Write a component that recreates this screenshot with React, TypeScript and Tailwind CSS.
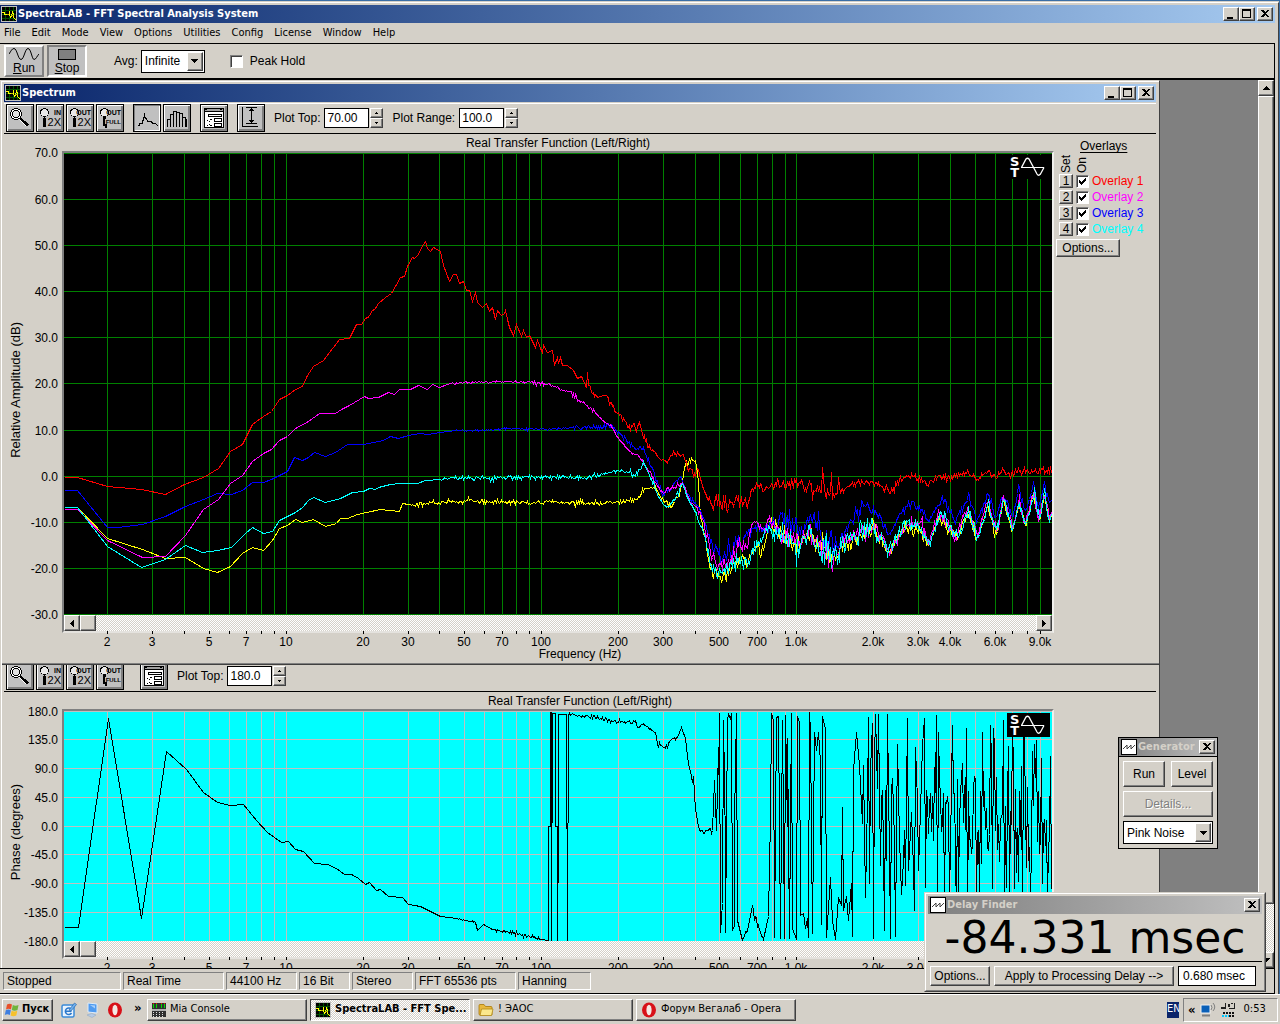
import React, { useId } from "react";

type Point = [x: number, y: number, noise?: number];

const RAISED =
  "border border-t-white border-l-white border-r-[#404040] border-b-[#404040] bg-[#d4d0c8] shadow-[inset_-1px_-1px_0_#808080]";
const SUNKEN = "border border-t-[#808080] border-l-[#808080] border-r-white border-b-white";
const DITHER = "bg-[repeating-conic-gradient(#ffffff_0_25%,#d4d0c8_0_50%)] bg-[length:2px_2px]";
const UI = "font-['DejaVu_Sans_Condensed','Noto_Sans',sans-serif] text-[11px]";
const ARIAL = "font-['Liberation_Sans',Arial,sans-serif] text-[12px]";

/* ---------- trace data ---------- */

function random(seed: number) {
  let s = seed;
  return () => {
    s = (s * 1664525 + 1013904223) % 4294967296;
    return s / 4294967296;
  };
}

function trace(points: Point[], seed: number) {
  const next = random(seed);
  const out: string[] = [];
  for (let i = 0; i < points.length - 1; i++) {
    const [x0, y0, n0 = 0] = points[i];
    const [x1, y1] = points[i + 1];
    if (n0 === 0) {
      out.push(`${x0},${y0}`);
      continue;
    }
    for (let x = x0; x < x1; x++) {
      const y = y0 + ((y1 - y0) * (x - x0)) / (x1 - x0);
      const r = next() + next() - 1;
      const spike = next() > 0.94 ? 1.7 : 1;
      out.push(`${x},${Math.round(y + r * n0 * 1.4 * spike)}`);
    }
  }
  const last = points[points.length - 1];
  out.push(`${last[0]},${last[1]}`);
  return out.join(" ");
}

const RED: Point[] = [
  [64, 477], [77, 477], [107, 486], [141, 489], [165, 494], [184, 484], [203, 477], [218, 468], [230, 451], [242, 444],
  [252, 424], [263, 416], [271, 411], [279, 399], [287, 395], [295, 389], [302, 386], [307, 375], [313, 366], [323, 360],
  [339, 339], [349, 338], [356, 324], [361, 324], [365, 318], [369, 316], [371, 311], [375, 308], [378, 303], [385, 297],
  [391, 293], [400, 277], [404, 276], [407, 266], [412, 257], [414, 258], [418, 254], [421, 247], [425, 241], [427, 248],
  [430, 251], [433, 247], [440, 251], [443, 265], [449, 281], [453, 274], [456, 274], [459, 283], [463, 281], [466, 290],
  [469, 290], [472, 301], [475, 292], [477, 302], [482, 307], [486, 303], [489, 311], [492, 307], [495, 319], [497, 310],
  [500, 315, 1], [504, 313], [505, 310], [507, 319], [509, 327], [513, 335], [516, 324], [521, 336], [523, 330], [526, 337],
  [529, 335], [532, 341], [535, 347], [537, 340], [539, 345], [542, 353], [543, 345], [547, 352], [552, 350], [554, 365],
  [557, 357], [558, 363], [560, 357], [562, 365], [567, 365], [573, 370], [577, 378], [581, 376], [586, 387], [587, 372],
  [588, 386, 3], [593, 394, 2], [597, 397, 1], [606, 395, 3], [617, 413, 3], [630, 427, 4], [637, 426], [639, 423, 3],
  [644, 438, 3], [650, 448, 2], [658, 458, 1], [667, 461, 2], [673, 452, 2], [683, 456, 3], [687, 465, 4], [695, 475],
  [697, 467, 3], [702, 487, 5], [707, 497, 7], [712, 503, 8], [727, 505, 8], [740, 500, 9], [748, 496, 6], [753, 488, 5],
  [765, 488, 4], [773, 483, 6], [797, 483, 6], [812, 489, 6], [821, 492], [822, 467], [824, 492, 5], [830, 492], [831, 472],
  [832, 496, 4], [837, 492], [838, 477], [840, 492, 3], [845, 487, 3], [857, 482, 3], [873, 481, 3], [885, 488, 5],
  [892, 492, 5], [896, 482, 3], [905, 475, 3], [917, 478, 3], [928, 485, 4], [938, 474, 4], [950, 479, 3], [960, 473, 3],
  [968, 472, 3], [977, 480, 3], [985, 472, 3], [995, 476, 3], [1002, 470, 3], [1010, 475, 3], [1018, 471, 4], [1045, 470, 5],
  [1051, 473],
];

const MAGENTA: Point[] = [
  [64, 509], [77, 509], [107, 540], [142, 557], [165, 556], [185, 535], [203, 509], [218, 499], [230, 483], [242, 475],
  [252, 461], [263, 453], [271, 449], [279, 440], [287, 436], [295, 428], [308, 421], [319, 413], [335, 413], [341, 409],
  [349, 405], [364, 396], [368, 398], [378, 397], [388, 392], [394, 394], [399, 389], [410, 389], [418, 385], [427, 389],
  [432, 384], [439, 387], [450, 383, 1], [467, 382, 1], [507, 381, 1], [533, 382, 2], [553, 385, 2], [563, 390, 1],
  [570, 392, 2], [580, 401, 2], [593, 410, 1], [602, 420, 1], [610, 425, 1], [618, 438, 1], [630, 452, 1], [638, 455, 2],
  [647, 468, 2], [655, 482, 2], [663, 493, 2], [670, 488, 2], [682, 482, 2], [687, 493, 2], [690, 502, 2], [698, 508, 4],
  [705, 530, 5], [710, 553, 7], [718, 567, 9], [727, 563, 9], [737, 543, 7], [747, 548, 5], [752, 522, 1], [757, 521, 3],
  [763, 533, 4], [767, 520, 7], [780, 532, 9], [797, 540, 8], [810, 533, 10], [820, 548, 12], [833, 557, 10], [843, 543, 7],
  [857, 533, 8], [873, 527, 8], [882, 535, 5], [888, 553, 5], [897, 540, 5], [907, 523, 6], [920, 523, 6], [928, 543, 5],
  [938, 512, 6], [955, 535, 5], [967, 506, 5], [977, 535, 5], [987, 500, 5], [996, 530, 5], [1003, 497, 5], [1012, 528, 4],
  [1019, 500, 5], [1025, 525, 4], [1033, 490, 5], [1038, 520, 4], [1044, 492, 4], [1049, 518], [1051, 512],
];

const BLUE: Point[] = [
  [64, 490], [77, 490], [107, 527], [117, 527], [142, 524], [165, 516], [185, 506], [203, 499], [217, 493], [231, 494],
  [242, 490], [252, 482], [263, 482], [271, 479], [287, 471], [294, 457], [302, 460], [308, 457], [314, 452], [325, 456],
  [335, 452], [347, 444], [363, 444], [383, 440], [390, 436], [398, 438], [408, 435], [420, 433], [427, 434], [440, 432],
  [455, 430, 1], [480, 430, 1], [507, 428, 1], [547, 429, 1], [573, 427, 2], [600, 426, 3], [612, 426, 2], [617, 430, 3],
  [627, 442, 2], [635, 448, 2], [640, 447, 2], [647, 457, 3], [653, 473, 3], [662, 492, 3], [670, 488, 2], [680, 476, 2],
  [687, 493, 2], [698, 507, 3], [705, 523, 5], [712, 548, 9], [720, 557, 9], [730, 550, 9], [740, 543, 8], [750, 533, 5],
  [757, 523, 3], [763, 533, 5], [768, 520, 11], [787, 520, 11], [800, 530, 10], [813, 521, 12], [822, 536, 18],
  [833, 547, 10], [847, 530, 7], [862, 505, 6], [877, 510, 6], [888, 535, 3], [903, 508, 5], [912, 503, 5], [928, 520, 3],
  [942, 498, 6], [955, 522, 4], [968, 495, 5], [977, 520, 4], [988, 492, 5], [996, 518, 4], [1003, 492, 5], [1012, 517, 4],
  [1018, 487, 5], [1026, 510, 4], [1033, 485, 5], [1038, 507, 3], [1044, 485, 4], [1049, 502], [1051, 500],
];

const CYAN: Point[] = [
  [64, 507], [77, 507], [107, 546], [141, 567], [165, 559], [185, 545], [202, 552], [217, 550], [231, 547], [245, 533],
  [252, 527], [263, 533], [272, 531], [279, 520], [295, 512], [302, 507], [308, 500], [313, 497], [325, 502], [340, 498],
  [352, 492], [363, 491], [369, 488], [375, 489], [378, 487], [390, 484], [400, 483], [417, 483], [425, 480], [440, 479, 1],
  [455, 477, 2], [467, 478, 2], [533, 477, 2], [587, 477, 2], [600, 474, 1], [620, 470, 2], [635, 475, 2], [643, 463, 2],
  [650, 475, 4], [657, 495, 2], [663, 505, 1], [668, 507, 2], [677, 493, 3], [682, 482, 2], [687, 498, 2], [695, 513, 4],
  [702, 530, 5], [710, 563, 5], [718, 574, 7], [727, 567, 7], [737, 560, 6], [747, 563, 6], [757, 543, 6], [768, 527, 8],
  [783, 538, 10], [798, 548, 8], [808, 530, 9], [820, 550, 16], [832, 556, 15], [843, 548, 8], [853, 535, 9], [872, 525, 9],
  [882, 540, 5], [887, 552, 5], [903, 525, 6], [918, 527, 5], [928, 545, 5], [940, 513, 6], [957, 537, 5], [968, 512, 6],
  [977, 537, 4], [988, 505, 6], [996, 532, 5], [1003, 500, 6], [1012, 529, 4], [1019, 502, 5], [1025, 526, 4],
  [1034, 493, 5], [1039, 520, 4], [1044, 493, 4], [1049, 521], [1051, 514],
];

const YELLOW: Point[] = [
  [64, 507], [77, 507], [107, 538], [142, 549], [165, 558], [185, 557], [203, 568], [217, 572], [230, 566], [242, 553],
  [252, 547], [263, 550], [272, 540], [279, 528], [287, 525], [295, 519], [302, 522], [313, 519], [325, 526], [336, 523],
  [340, 518], [347, 518], [357, 514], [380, 509], [399, 511], [402, 503], [408, 505, 2], [440, 502, 2], [465, 501, 2],
  [540, 502, 2], [600, 502, 2], [625, 501, 2], [637, 498, 2], [645, 488, 1], [655, 487, 2], [660, 497, 3], [670, 506, 3],
  [678, 498, 3], [682, 480, 3], [685, 462, 5], [690, 463, 5], [694, 457, 5], [697, 472], [698, 483], [700, 517, 4],
  [705, 540, 5], [710, 570, 5], [718, 575, 6], [728, 572, 5], [740, 557, 6], [747, 563, 5], [757, 543, 6], [763, 550],
  [769, 518, 8], [783, 540, 8], [798, 545, 8], [808, 530, 9], [820, 548, 14], [833, 558, 9], [843, 546, 9], [853, 538, 8],
  [872, 527, 10], [882, 543, 5], [888, 554, 4], [903, 526, 5], [918, 530, 5], [928, 545, 4], [938, 516, 6], [955, 537, 5],
  [967, 514, 6], [977, 537, 4], [987, 506, 6], [996, 533, 4], [1003, 502, 5], [1012, 530, 4], [1019, 503, 5],
  [1025, 526, 4], [1033, 494, 5], [1038, 521, 4], [1044, 496, 4], [1049, 519], [1051, 515],
];

const PHASE_START: Point[] = [
  [64, 927], [78, 927], [108, 718], [141, 918], [166, 751], [186, 769], [203, 792], [217, 802], [230, 805], [243, 804],
  [256, 820], [267, 832], [281, 842], [288, 841], [295, 849], [303, 851], [314, 863], [327, 864], [336, 868], [344, 874],
  [351, 874], [358, 878], [365, 884], [369, 882], [376, 890], [380, 889], [388, 896], [402, 897], [408, 904], [420, 906],
  [428, 910], [440, 916], [457, 918, 1], [475, 922], [477, 930], [483, 924], [492, 929, 1], [507, 932, 2], [520, 934, 2],
  [540, 939], [548, 940], [548, 826], [550, 826], [550, 712], [551, 712], [551, 940], [552, 713], [555, 713], [555, 826],
  [557, 826], [557, 940], [558, 826], [558, 714], [566, 714], [567, 940], [568, 714, 2], [587, 716, 2], [600, 718, 2],
  [617, 721, 2], [633, 723, 4], [645, 726, 3], [655, 732], [657, 743, 2], [666, 747, 2], [672, 737, 3], [677, 737],
  [681, 727], [685, 738], [687, 757, 2], [692, 782], [693, 776], [695, 810, 3], [700, 832, 2], [712, 830], [714, 780],
  [716, 830], [718, 747], [719, 800], [719, 713], [720, 932], [722, 903], [723, 720], [725, 845], [725, 932], [727, 720],
  [728, 713], [730, 719], [731, 713], [732, 930], [734, 925], [734, 820], [736, 713], [737, 920], [741, 939, 4],
  [747, 930], [752, 905, 5], [757, 927, 4], [763, 939], [768, 916], [770, 818], [771, 713], [773, 720], [774, 937],
  [776, 717], [778, 716], [780, 938], [782, 720], [783, 826], [784, 938], [785, 715], [787, 826], [787, 738], [789, 938],
  [790, 820], [791, 713], [792, 928], [796, 939], [797, 716], [799, 722], [800, 915], [803, 913], [805, 928], [807, 918],
  [808, 937], [809, 712], [810, 730], [812, 933], [814, 732], [816, 750], [818, 732], [820, 762], [821, 924], [822, 716],
  [825, 728], [826, 937], [830, 877], [832, 920], [835, 939], [838, 897], [841, 905], [842, 807], [843, 910], [846, 896],
  [848, 920], [851, 883], [852, 936], [853, 770], [856, 732], [859, 765], [862, 823], [863, 765], [865, 897], [867, 800],
  [868, 717], [869, 883], [870, 770], [872, 723], [873, 938], [874, 760], [875, 714], [877, 788], [878, 714], [879, 790],
  [880, 865], [881, 800], [882, 790], [883, 848], [884, 930], [885, 790], [886, 860], [887, 714], [888, 790], [889, 850],
  [890, 938], [891, 790], [892, 778], [894, 840], [895, 936], [896, 830], [897, 744], [899, 838], [901, 894], [903, 860],
  [904, 830], [905, 885], [906, 795], [907, 718], [908, 870], [911, 812], [913, 868], [914, 910], [915, 747], [917, 800],
  [918, 870], [920, 810], [922, 745], [924, 718],
];

function phaseTrace() {
  const next = random(77);
  const tail: string[] = [];
  let high = false;
  for (let x = 925; x < 1052; x++) {
    const level = next();
    const y = high ? 714 + level * 140 : 940 - level * 200;
    tail.push(`${x},${Math.round(y)}`);
    if (next() > 0.2) high = !high;
  }
  return `${trace(PHASE_START, 5)} ${tail.join(" ")}`;
}

const GRID_X = [
  107, 152, 184, 209, 229, 246, 261, 274, 286, 363, 408, 439, 464, 484, 502, 516, 529, 541, 618, 663, 695, 719, 740, 757,
  772, 785, 796, 873, 918, 950, 975, 995, 1012, 1027, 1040,
];

const X_LABELS: [number, string][] = [
  [107, "2"], [152, "3"], [209, "5"], [246, "7"], [286, "10"], [363, "20"], [408, "30"], [464, "50"], [502, "70"],
  [541, "100"], [618, "200"], [663, "300"], [719, "500"], [757, "700"], [796, "1.0k"], [873, "2.0k"], [918, "3.0k"],
  [950, "4.0k"], [995, "6.0k"], [1040, "9.0k"],
];

const X_LEFT = 64;
const X_SPAN = 988;
const percentX = (x: number) => `${((x - X_LEFT) / X_SPAN) * 100}%`;

/* ---------- icons ---------- */

function AppIcon() {
  return (
    <svg width="16" height="16" viewBox="0 0 16 16" shapeRendering="crispEdges" className="shrink-0" aria-hidden="true">
      <rect width="16" height="16" fill="#c0c0c0" />
      <rect x="1" y="1" width="14" height="14" fill="#000" />
      <path d="M1 4.5h14M1 8.5h14M1 12.5h14M4.5 1v14M8.5 1v14M12.5 1v14" stroke="#005000" />
      <path d="M1 6.5h2l1 2h2M8.500 5v4l1 2 1-1 1-4 1 2v3l2 3" stroke="#ff0" fill="none" />
      <path d="M5.500 8.500h2M9.500 9.500h3" stroke="#c0c000" />
    </svg>
  );
}

function WaveIcon() {
  return (
    <svg width="16" height="16" viewBox="0 0 16 16" className="shrink-0" aria-hidden="true">
      <rect x=".5" y=".5" width="15" height="15" fill="#fff" stroke="#000" />
      <path d="M2 10l4-4v4l4-4v4l4-4" stroke="#404040" fill="none" />
    </svg>
  );
}

function MagnifierIcon() {
  return (
    <svg width="26" height="26" viewBox="0 0 26 26" shapeRendering="crispEdges" aria-hidden="true">
      <circle cx="9" cy="9" r="5.5" fill="none" stroke="#000" />
      <circle cx="9" cy="9" r="4.5" fill="none" stroke="#fff" />
      <circle cx="9" cy="9" r="3.5" fill="#e0e0e0" stroke="#000" />
      <path d="M12 14l7 7" stroke="#fff" />
      <path d="M13 13l8 7.500" stroke="#000" strokeWidth="2.500" />
    </svg>
  );
}

function ZoomIcon({ top, bottom }: { top: string; bottom: string }) {
  const full = bottom === "FULL";
  return (
    <span className="relative block size-[26px]">
      <svg width="26" height="26" viewBox="0 0 26 26" shapeRendering="crispEdges" aria-hidden="true">
        <circle cx="7.500" cy="7.500" r="4" fill="#e8e8e8" stroke="#000" />
        <path d="M7.500 11v3" stroke="#000" />
        {full ? <path d="M8.500 13h-2v7h2v3" fill="none" stroke="#000" strokeWidth="2" /> : <path d="M6 13h3v9H6z" fill="#000" />}
      </svg>
      <span className="absolute right-0.5 top-1 font-['Liberation_Sans',sans-serif] text-[7px] font-bold leading-[7px]">
        {top}
      </span>
      <span
        className={
          full
            ? "absolute bottom-1.5 right-0.5 font-['Liberation_Sans',sans-serif] text-[6px] font-bold leading-[6px]"
            : "absolute bottom-1 right-0.5 font-['Liberation_Sans',sans-serif] text-[11px] leading-[10px]"
        }
      >
        {bottom}
      </span>
    </span>
  );
}

function CurveIcon() {
  return (
    <svg width="26" height="26" viewBox="0 0 26 26" shapeRendering="crispEdges" aria-hidden="true">
      <path d="M4 20.500h1l1-2h2l1-3 1-3V8M10.500 8v4l2 2 1 2h3l2 2h3l2 3" stroke="#000" fill="none" />
    </svg>
  );
}

function BarsIcon() {
  return (
    <svg width="26" height="26" viewBox="0 0 26 26" shapeRendering="crispEdges" aria-hidden="true">
      <path
        d="M3.500 22V14.500h3M6.500 22V9.500h3M9.500 22V6.500h3M12.500 22V6.500M12.500 7.500h3V22M15.500 8.500h3V22M18.500 12.500h3V22M21.500 14.500h1V22"
        stroke="#000"
        fill="none"
      />
    </svg>
  );
}

function OptionsIcon() {
  return (
    <svg width="26" height="26" viewBox="0 0 26 26" shapeRendering="crispEdges" aria-hidden="true">
      <rect x="3.500" y="3.500" width="19" height="19" fill="#fff" stroke="#000" />
      <rect x="4" y="4" width="18" height="3" fill="#a0a0a0" />
      <path d="M4 3h2v2H4zM19 3h2v2h-2zM3 6h20v1H3z" fill="#000" />
      <path d="M7.500 9.500h13v2h-13zM13.500 13.500h7v3h-7zM13.500 18.500h7v3h-7z" fill="none" stroke="#000" />
      <path d="M6 15.500h1M8 16.500h1M9 14.500h2M6 20.500h1M8 19.500h1M9 20.500h2" stroke="#000" />
    </svg>
  );
}

function RangeIcon() {
  return (
    <svg width="26" height="26" viewBox="0 0 26 26" shapeRendering="crispEdges" aria-hidden="true">
      <path d="M4.500 2v20M4 21.500h16M8 2.500h11M8 18.500h11M13.500 3v15" stroke="#000" fill="none" />
      <path d="M13 3h1v1h1v1h1v1h-5V5h1V4h1zM11 15h5v1h-1v1h-1v1h-1v-1h-1v-1h-1z" fill="#000" />
    </svg>
  );
}

function Arrow({ dir, small }: { dir: "up" | "down" | "left" | "right"; small?: boolean }) {
  const d = {
    up: "M3 0h1v1h1v1h1v1h1v1H0V3h1V2h1V1h1z",
    down: "M0 0h7v1H6v1H5v1H4v1H3V3H2V2H1V1H0z",
    left: "M3 0h1v7H3V6H2V5H1V4H0V3h1V2h1V1h1z",
    right: "M0 0h1v1h1v1h1v1h1v1H3v1H2v1H1v1H0z",
  }[dir];
  const smallPath = dir === "up" ? "M1 0h1v1h1v1H0V1h1z" : "M0 0h3v1H2v1H1V1H0z";
  const wide = dir === "up" || dir === "down";
  const w = small ? 3 : wide ? 7 : 4;
  const h = small ? 2 : wide ? 4 : 7;
  return (
    <svg width={w} height={h} viewBox={`0 0 ${w} ${h}`} shapeRendering="crispEdges" aria-hidden="true">
      <path d={small ? smallPath : d} fill="#000" />
    </svg>
  );
}

/* ---------- controls ---------- */

function CaptionButton({ kind }: { kind: "Minimize" | "Maximize" | "Close" }) {
  return (
    <button aria-label={kind} className={`flex h-[14px] w-4 shrink-0 items-center justify-center ${RAISED}`}>
      <svg width="12" height="10" viewBox="0 0 12 10" shapeRendering="crispEdges" aria-hidden="true">
        {kind === "Minimize" && <path d="M2 8h6v2H2z" fill="#000" />}
        {kind === "Maximize" && <path d="M1.500 0v8.500h8V0" fill="none" stroke="#000" />}
        {kind === "Maximize" && <path d="M1 0h9v2H1z" fill="#000" />}
        {kind === "Close" && <path d="M2 1h2l2 2 2-2h2L7 4.500 10 8H8L6 6 4 8H2l3-3.500z" fill="#000" />}
      </svg>
    </button>
  );
}

function TitleBar({ title }: { title: string }) {
  return (
    <div className="flex h-[18px] shrink-0 items-center bg-linear-to-r from-[#0a246a] to-[#a6caf0] pl-px pr-0.5">
      <AppIcon />
      <h1 className={`ml-px flex-1 font-bold text-white ${UI}`}>{title}</h1>
      <CaptionButton kind="Minimize" />
      <CaptionButton kind="Maximize" />
      <span className="w-0.5" />
      <CaptionButton kind="Close" />
    </div>
  );
}

function ToolButton({ label, pressed, children }: { label: string; pressed?: boolean; children: React.ReactNode }) {
  return (
    <button
      aria-label={label}
      aria-pressed={pressed}
      className={
        pressed
          ? "size-7 shrink-0 border border-black bg-[#c0c0c0] shadow-[inset_1px_1px_0_#808080,inset_-1px_-1px_0_#fff]"
          : "size-7 shrink-0 border border-black bg-[#c0c0c0] shadow-[inset_1px_1px_0_#fff,inset_-2px_-2px_0_#808080]"
      }
    >
      {children}
    </button>
  );
}

function ZoomButtons() {
  return (
    <div className="flex gap-0.5">
      <ToolButton label="Zoom"><MagnifierIcon /></ToolButton>
      <ToolButton label="Zoom in 2X"><ZoomIcon top="IN" bottom="2X" /></ToolButton>
      <ToolButton label="Zoom out 2X"><ZoomIcon top="OUT" bottom="2X" /></ToolButton>
      <ToolButton label="Zoom out full"><ZoomIcon top="OUT" bottom="FULL" /></ToolButton>
    </div>
  );
}

function Spinner({ label, value }: { label: string; value: string }) {
  const id = useId();
  return (
    <div className="flex items-center">
      <label htmlFor={id} className="mr-1 whitespace-nowrap">{label}</label>
      <input id={id} defaultValue={value} className="h-5 w-[45px] border border-black bg-white pl-0.5 outline-none" />
      <span className="ml-px flex flex-col">
        <button aria-label={`${label} up`} className={`flex h-2.5 w-[13px] items-center justify-center ${RAISED}`}>
          <Arrow dir="up" small />
        </button>
        <button aria-label={`${label} down`} className={`flex h-2.5 w-[13px] items-center justify-center ${RAISED}`}>
          <Arrow dir="down" small />
        </button>
      </span>
    </div>
  );
}

function DropDown({ id, label, value, className }: { id: string; label?: string; value: string; className: string }) {
  return (
    <div className={`relative ${className}`}>
      <select
        id={id}
        aria-label={label}
        defaultValue={value}
        className="block h-[23px] w-full appearance-none border border-black bg-white pl-[3px] outline-none"
      >
        <option>{value}</option>
      </select>
      <span
        className={`pointer-events-none absolute bottom-0.5 right-0.5 top-0.5 flex w-4 items-center justify-center ${RAISED}`}
      >
        <Arrow dir="down" />
      </span>
    </div>
  );
}

/* ---------- plot ---------- */

function PlotLogo() {
  return (
    <div className="absolute right-0.5 top-0.5 flex h-6 w-[43px] items-center gap-0.5 bg-black pl-[3px] text-white">
      <span className="flex flex-col items-center font-['DejaVu_Sans',sans-serif] text-[13px] font-bold leading-[11px]">
        <span>S</span>
        <span>T</span>
      </span>
      <svg width="24" height="20" viewBox="0 0 24 20" aria-hidden="true">
        <path d="M0 10.500h23" stroke="#fff" />
        <path d="M.5 10.500L5 2q1.500-1.500 3 0l8 15q1.500 2.500 3.500 0L23 10.500" fill="none" stroke="#fff" strokeWidth="1.300" />
      </svg>
    </div>
  );
}

interface PlotProps {
  axisTitle: string;
  titleClass: string;
  yTop: number;
  height: number;
  heightClass: string;
  yTicks: [number, string][];
  background: string;
  gridColor: string;
  lines: { points: string; color: string }[];
}

function Plot({ axisTitle, titleClass, yTop, height, heightClass, yTicks, background, gridColor, lines }: PlotProps) {
  return (
    <>
      <div className="flex w-[58px] shrink-0 pt-[19px]">
        <div className={`flex w-6 items-center justify-center pt-3 ${heightClass}`}>
          <span className="rotate-180 whitespace-nowrap text-[13px] [writing-mode:vertical-rl]">{axisTitle}</span>
        </div>
        <div className={`relative flex-1 ${heightClass}`}>
          {yTicks.map(([y, text]) => (
            <span
              key={text}
              className="absolute right-1 -translate-y-1/2 leading-4"
              style={{ top: `${((y + 0.5 - yTop) / height) * 100}%` }}
            >
              {text}
            </span>
          ))}
        </div>
      </div>
      <div className="min-w-0 flex-1">
        <h2 className={`flex h-[17px] items-center justify-center pt-px font-normal ${titleClass}`}>
          Real Transfer Function (Left/Right)
        </h2>
        <div className="border-2 border-b-[#e4e2de] border-l-[#808080] border-r-[#f0efec] border-t-[#808080]">
          <div className={`relative ${heightClass}`}>
            <svg
              className="block h-full w-full"
              viewBox={`${X_LEFT} ${yTop} ${X_SPAN} ${height}`}
              preserveAspectRatio="none"
              shapeRendering="crispEdges"
              role="img"
              aria-label={axisTitle}
            >
              <rect x={X_LEFT} y={yTop} width={X_SPAN} height={height} fill={background} />
              {GRID_X.map((x) => (
                <path key={x} d={`M${x + 0.5} ${yTop}v${height}`} stroke={gridColor} />
              ))}
              {yTicks.map(([y]) => (
                <path key={y} d={`M${X_LEFT} ${y + 0.5}h${X_SPAN}`} stroke={gridColor} />
              ))}
              <g transform="translate(0.5 0.5)">
                {lines.map((line) => (
                  <polyline key={line.color} points={line.points} fill="none" stroke={line.color} />
                ))}
              </g>
            </svg>
            <PlotLogo />
          </div>
          <div className={`flex h-4 ${DITHER}`}>
            <button aria-label="Scroll left" className={`flex w-4 items-center justify-center ${RAISED}`}>
              <Arrow dir="left" />
            </button>
            <button aria-label="Scroll position" className={`w-4 ${RAISED}`} />
            <span className="flex-1" />
            <button aria-label="Scroll right" className={`flex w-4 items-center justify-center ${RAISED}`}>
              <Arrow dir="right" />
            </button>
          </div>
        </div>
        <div className="relative mx-0.5 h-[14px]">
          {GRID_X.map((x) => (
            <span key={x} className="absolute -top-0.5 h-[3px] w-px bg-black" style={{ left: percentX(x) }} />
          ))}
          {X_LABELS.map(([x, text]) => (
            <span
              key={text}
              className="absolute top-0.5 -translate-x-1/2 leading-[14px]"
              style={{ left: percentX(x) }}
            >
              {text}
            </span>
          ))}
        </div>
      </div>
    </>
  );
}

const AMPLITUDE_TICKS: [number, string][] = [
  [153, "70.0"], [199, "60.0"], [245, "50.0"], [291, "40.0"], [337, "30.0"], [383, "20.0"], [430, "10.0"], [476, "0.0"],
  [522, "-10.0"], [568, "-20.0"], [614, "-30.0"],
];

const PHASE_TICKS: [number, string][] = [
  [711, "180.0"], [739, "135.0"], [768, "90.0"], [797, "45.0"], [826, "0.0"], [854, "-45.0"], [883, "-90.0"],
  [912, "-135.0"], [941, "-180.0"],
];

function Overlays() {
  const rows = [
    ["1", "text-[#ff0000]"],
    ["2", "text-[#ff00ff]"],
    ["3", "text-[#0000ff]"],
    ["4", "text-[#00ffff]"],
  ];
  return (
    <aside className="w-[102px] shrink-0 pl-0.5 pt-1">
      <div className="pl-6 leading-4 underline underline-offset-2">Overlays</div>
      <div className="-mt-0.5 flex h-[21px] items-end gap-0.5 pl-[3px]">
        <span className="rotate-180 leading-[14px] [writing-mode:vertical-rl]">Set</span>
        <span className="rotate-180 leading-[14px] [writing-mode:vertical-rl]">On</span>
      </div>
      {rows.map(([n, color]) => (
        <div key={n} className="flex h-4 items-center pl-[3px]">
          <button className={`flex h-3.5 w-3.5 items-center justify-center leading-3 ${RAISED}`}>{n}</button>
          <label className={`ml-[3px] flex items-center gap-[3px] whitespace-nowrap ${color}`}>
            <CheckBox checked />
            Overlay {n}
          </label>
        </div>
      ))}
      <button className={`mt-0.5 h-[18px] w-16 leading-none ${RAISED}`}>Options...</button>
    </aside>
  );
}

function CheckBox({ checked }: { checked?: boolean }) {
  return (
    <span className="relative block size-[13px]">
      <input
        type="checkbox"
        defaultChecked={checked}
        className="peer block size-[13px] appearance-none border border-b-white border-l-[#808080] border-r-white border-t-[#808080] bg-white shadow-[inset_1px_1px_0_#404040]"
      />
      <svg
        className="pointer-events-none absolute left-[3px] top-[3px] hidden peer-checked:block"
        width="7"
        height="7"
        viewBox="0 0 7 7"
        shapeRendering="crispEdges"
        aria-hidden="true"
      >
        <path d="M0 2h1v1h1v1h1V3h1V2h1V1h1V0h1v3H6v1H5v1H4v1H3v1H2V6H1V5H0z" fill="#000" />
      </svg>
    </span>
  );
}

function SpectrumWindow() {
  return (
    <section className="mr-[98px] h-[1000px] min-w-0 flex-1 border border-l-[#d4d0c8] border-r-[#404040] border-t-[#d4d0c8] bg-[#d4d0c8]">
      <div className="h-full border-l border-t border-l-white border-t-white pl-0.5 pr-[3px] pt-0.5">
        <TitleBar title="Spectrum" />
        <div className="mt-px flex h-[31px] items-center gap-[9px] border-b border-t border-b-black border-t-white pb-px pl-0.5">
          <ZoomButtons />
          <div className="flex gap-0.5">
            <ToolButton label="Line plot" pressed><CurveIcon /></ToolButton>
            <ToolButton label="Bar plot"><BarsIcon /></ToolButton>
          </div>
          <ToolButton label="Display options"><OptionsIcon /></ToolButton>
          <ToolButton label="Vertical scale"><RangeIcon /></ToolButton>
          <Spinner label="Plot Top:" value="70.00" />
          <Spinner label="Plot Range:" value="100.0" />
        </div>
        <div className="flex">
          <Plot
            axisTitle="Relative Amplitude (dB)"
            titleClass="pl-0"
            yTop={153}
            height={462}
            heightClass="h-[462px]"
            yTicks={AMPLITUDE_TICKS}
            background="#000000"
            gridColor="#008000"
            lines={[
              { points: trace(YELLOW, 11), color: "#ffff00" },
              { points: trace(RED, 23), color: "#ff0000" },
              { points: trace(BLUE, 37), color: "#0000ff" },
              { points: trace(MAGENTA, 41), color: "#ff00ff" },
              { points: trace(CYAN, 59), color: "#00ffff" },
            ]}
          />
          <Overlays />
        </div>
        <div className="flex h-4 items-start justify-center leading-[14px]">Frequency (Hz)</div>
        <div className="-ml-0.5 -mr-[3px] h-0.5 border-b border-t border-b-[#404040] border-t-[#808080]" />
        <div className="flex h-[27px] items-end overflow-hidden border-b border-black pb-px pl-0.5">
          <ZoomButtons />
          <span className="ml-4 mr-[9px] flex">
            <ToolButton label="Phase options"><OptionsIcon /></ToolButton>
          </span>
          <div className="mb-1">
            <Spinner label="Plot Top:" value="180.0" />
          </div>
        </div>
        <div className="flex">
          <Plot
            axisTitle="Phase (degrees)"
            titleClass="pl-11"
            yTop={711}
            height={230}
            heightClass="h-[230px]"
            yTicks={PHASE_TICKS}
            background="#00ffff"
            gridColor="#c0c0c0"
            lines={[{ points: phaseTrace(), color: "#000000" }]}
          />
          <div className="w-[102px] shrink-0" />
        </div>
      </div>
    </section>
  );
}

/* ---------- floating tool windows ---------- */

function ToolTitle({ title }: { title: string }) {
  return (
    <div className="flex h-[18px] items-center bg-linear-to-r from-[#808080] to-[#c0c0c0] px-0.5">
      <WaveIcon />
      <h2 className={`ml-px min-w-0 flex-1 overflow-hidden whitespace-nowrap font-bold text-[#d4d0c8] ${UI}`}>{title}</h2>
      <CaptionButton kind="Close" />
    </div>
  );
}

function Generator() {
  return (
    <section className="absolute bottom-[175px] right-[62px] w-[100px] border border-black bg-[#d4d0c8]">
      <div className="border-b border-black">
        <ToolTitle title="Generator" />
      </div>
      <div className="grid grid-cols-2 gap-x-1.5 gap-y-1 p-1">
        <button className={`h-[26px] ${RAISED}`}>Run</button>
        <button className={`h-[26px] ${RAISED}`}>Level</button>
        <button disabled className={`col-span-2 h-[26px] text-[#808080] [text-shadow:1px_1px_0_#fff] ${RAISED}`}>
          Details...
        </button>
        <DropDown id="noise" label="Signal type" value="Pink Noise" className="col-span-2" />
      </div>
    </section>
  );
}

function DelayFinder() {
  return (
    <section className="absolute bottom-8 right-3.5 w-[342px] border border-b-[#404040] border-l-[#d4d0c8] border-r-[#404040] border-t-[#d4d0c8] bg-[#d4d0c8]">
      <div className="border border-b-[#808080] border-l-white border-r-[#808080] border-t-white p-0.5">
        <ToolTitle title="Delay Finder" />
        <output className="block whitespace-nowrap text-center font-['DejaVu_Sans',sans-serif] text-[44px] leading-[47px]">
          -84.331 msec
        </output>
        <div className="flex gap-1 border-t border-black px-0.5 pb-0.5 pt-1">
          <button className={`h-5 w-[60px] ${RAISED}`}>Options...</button>
          <button className={`h-5 w-[180px] ${RAISED}`}>Apply to Processing Delay --&gt;</button>
          <input
            aria-label="Processing delay"
            defaultValue="0.680 msec"
            className="h-5 w-[78px] border border-black bg-white pl-1 outline-none"
          />
        </div>
      </div>
    </section>
  );
}

/* ---------- taskbar ---------- */

function StartFlag() {
  return (
    <svg width="16" height="16" viewBox="0 0 16 16" className="shrink-0" aria-hidden="true">
      <path d="M3 2.500Q5.500 1 8 2.500L7 7.500Q4.500 6 2 7.500z" fill="#e8502a" />
      <path d="M8.800 3Q11.500 4.500 14.500 3L13.500 8Q10.500 9.500 7.800 8z" fill="#6fb43c" />
      <path d="M1.800 8.300Q4.300 6.800 6.800 8.300L5.800 13Q3.300 11.500.8 13z" fill="#3f7fe0" />
      <path d="M7.600 8.800Q10.300 10.300 13.300 8.800L12.300 13.500Q9.300 15 6.600 13.500z" fill="#f6c12c" />
    </svg>
  );
}

function OperaIcon() {
  return (
    <svg width="16" height="16" viewBox="0 0 16 16" className="shrink-0" aria-hidden="true">
      <ellipse cx="8" cy="8" rx="7" ry="7.500" fill="#d81018" />
      <ellipse cx="8" cy="8" rx="2.600" ry="5.300" fill="#f4e8e4" />
    </svg>
  );
}

function MailIcon() {
  return (
    <svg width="16" height="16" viewBox="0 0 16 16" aria-hidden="true">
      <rect x="1" y="3" width="12" height="12" rx="1.500" fill="#e9f3fd" stroke="#3a8ad8" strokeWidth="1.500" />
      <path d="M10.500 7.500a3.300 3.300 0 1 0 0 3.500M5 9.200h5.500" fill="none" stroke="#2b78cc" strokeWidth="1.600" />
      <path d="M8 8l5.500-7 2 1.500L10 9z" fill="#6fb0ee" stroke="#2b68ac" strokeWidth=".7" />
    </svg>
  );
}

function DesktopIcon() {
  return (
    <svg width="16" height="16" viewBox="0 0 16 16" aria-hidden="true">
      <path d="M4 1l9 1v9l-9-1z" fill="#4f9bf0" stroke="#e0ecf8" />
      <path d="M6 3l5 .5v3z" fill="#a8d0fa" />
      <path d="M3 13q5-3 9 0l-4 2.500z" fill="#b8cce4" stroke="#8aa4c4" strokeWidth=".5" />
    </svg>
  );
}

function MixerIcon() {
  return (
    <svg width="14" height="14" viewBox="0 0 14 14" shapeRendering="crispEdges" className="shrink-0" aria-hidden="true">
      <rect width="14" height="14" fill="#303030" />
      <path d="M1.500 1v4M4.500 1v4M9.500 1v4M12.500 1v4" stroke="#00e000" />
      <path d="M1 .5h1M4 .5h1M9 .5h1M12 .5h1" stroke="#f00" />
      <path d="M0 7h14" stroke="#b0b0b0" strokeWidth="2" />
      <path d="M1.500 9v5M4.500 9v5M7.500 9v5M10.500 9v5" stroke="#e0e0e0" strokeDasharray="1 1" />
    </svg>
  );
}

function FolderIcon() {
  return (
    <svg width="16" height="16" viewBox="0 0 16 16" className="shrink-0" aria-hidden="true">
      <path d="M1 3.500q0-1 1-1h4l1.500 2H13q1 0 1 1V13H2q-1 0-1-1z" fill="#e8b83c" stroke="#a87808" strokeWidth=".8" />
      <path d="M3.500 7H15l-1.500 6.500H2z" fill="#fbe88c" stroke="#b08818" strokeWidth=".8" />
    </svg>
  );
}

function TaskButton({ icon, active, children }: { icon: React.ReactNode; active?: boolean; children: React.ReactNode }) {
  return (
    <button
      className={
        active
          ? `flex h-[22px] w-40 items-center gap-1 border border-b-white border-l-[#404040] border-r-white border-t-[#404040] pl-1 font-bold ${DITHER}`
          : `flex h-[22px] w-40 items-center gap-1 pl-1 ${RAISED}`
      }
    >
      {icon}
      <span className="truncate">{children}</span>
    </button>
  );
}

function Taskbar() {
  return (
    <footer className={`flex h-[30px] shrink-0 items-center border-t border-white pl-0.5 pr-0.5 ${UI}`}>
      <button className={`flex h-[22px] w-[51px] items-center gap-0.5 pl-px font-bold ${RAISED}`}>
        <StartFlag />
        Пуск
      </button>
      <nav className="ml-2 flex w-[84px] items-center gap-[7px]">
        <button aria-label="Outlook Express"><MailIcon /></button>
        <button aria-label="Show desktop"><DesktopIcon /></button>
        <button aria-label="Opera"><OperaIcon /></button>
        <button aria-label="More shortcuts" className="-mt-1 ml-1 text-[13px] font-bold">»</button>
      </nav>
      <div className="ml-0.5 flex flex-1 gap-[3px]">
        <TaskButton icon={<MixerIcon />}>Mia Console</TaskButton>
        <TaskButton icon={<AppIcon />} active>SpectraLAB - FFT Spe...</TaskButton>
        <TaskButton icon={<FolderIcon />}>! ЭАОС</TaskButton>
        <TaskButton icon={<OperaIcon />}>Форум Вегалаб - Opera</TaskButton>
      </div>
      <span className="mr-1 flex h-4 w-3 items-center overflow-hidden bg-[#0a246a] text-white">EN</span>
      <div className={`flex h-6 w-[95px] items-center gap-1 pl-1 ${SUNKEN}`}>
        <span className="text-[13px] font-bold">«</span>
        <svg width="16" height="16" viewBox="0 0 16 16" aria-hidden="true">
          <rect x="1" y="3" width="9" height="8" fill="#0a60b8" stroke="#f0f0f0" />
          <path d="M2 13.500h8" stroke="#808080" strokeWidth="2" />
          <path d="M11 3q2 2.500 0 5M13 1q3.500 4 0 8" stroke="#808080" fill="none" />
        </svg>
        <svg width="16" height="16" viewBox="0 0 16 16" shapeRendering="crispEdges" aria-hidden="true">
          <path d="M1 5h5v2H1zM5 1h1v5H5zM8 2h2v3H8zM9 6h6v1H9zM14 1h1v6h-1zM11 1h2v1h-2z" fill="#202020" />
          <path d="M3 10.500h11" stroke="#101010" strokeWidth="2" strokeDasharray="2 1" />
          <path d="M2 13.500h7" stroke="#00c8ff" strokeWidth="2" strokeDasharray="2 1" />
          <path d="M9 13.500h5" stroke="#101010" strokeWidth="2" strokeDasharray="2 1" />
        </svg>
        <time className="ml-1">0:53</time>
      </div>
    </footer>
  );
}

/* ---------- application ---------- */

const MENU = ["File", "Edit", "Mode", "View", "Options", "Utilities", "Config", "License", "Window", "Help"];

function MainToolbar() {
  return (
    <div className="flex h-[37px] shrink-0 items-center border-b-2 border-r border-t border-black pl-1">
      <button className="flex h-8 w-10 flex-col items-center justify-end border-2 border-b-[#808080] border-l-white border-r-[#808080] border-t-white bg-[#c0c0c0] leading-[13px]">
        <svg width="30" height="14" viewBox="0 0 30 14" className="mb-px shrink-0" aria-hidden="true">
          <path d="M0 7C2 4 3 1.500 5 1.500C8 1.500 9 12.500 12 12.500C15 12.500 16 1.500 19 1.500C22 1.500 23 12.500 25 12.500C27 12.500 28 9 30 7" fill="none" stroke="#000" />
        </svg>
        <span><u>R</u>un</span>
      </button>
      <button className="ml-[3px] flex h-8 w-10 flex-col items-center justify-end border-2 border-b-white border-l-[#808080] border-r-white border-t-[#808080] bg-[#c0c0c0] leading-[13px]">
        <span className="mb-0.5 h-[11px] w-[18px] border border-black bg-[#808080]" />
        <span><u>S</u>top</span>
      </button>
      <label htmlFor="avg" className="ml-[27px] mr-[3px]">Avg:</label>
      <DropDown id="avg" value="Infinite" className="w-16" />
      <label className="ml-[25px] flex items-center gap-[7px]">
        <CheckBox />
        Peak Hold
      </label>
    </div>
  );
}

function StatusBar() {
  return (
    <div className="flex h-[26px] shrink-0 gap-0.5 border-b border-r border-t border-black pl-[3px] pt-[3px]">
      <span className={`h-[18px] w-[118px] pl-[3px] leading-4 ${SUNKEN}`}>Stopped</span>
      <span className={`h-[18px] w-[101px] pl-[3px] leading-4 ${SUNKEN}`}>Real Time</span>
      <span className={`h-[18px] w-[71px] pl-[3px] leading-4 ${SUNKEN}`}>44100 Hz</span>
      <span className={`h-[18px] w-[51px] pl-[3px] leading-4 ${SUNKEN}`}>16 Bit</span>
      <span className={`h-[18px] w-[61px] pl-[3px] leading-4 ${SUNKEN}`}>Stereo</span>
      <span className={`h-[18px] w-[101px] pl-[3px] leading-4 ${SUNKEN}`}>FFT 65536 pts</span>
      <span className={`h-[18px] w-[73px] pl-[3px] leading-4 ${SUNKEN}`}>Hanning</span>
    </div>
  );
}

export default function App() {
  return (
    <main className={`relative flex h-screen flex-col overflow-hidden bg-[#d4d0c8] text-black ${ARIAL}`}>
      <div className="flex min-h-0 flex-1 flex-col border-r border-t border-[#3a6ea5]">
        <div className="mt-px flex min-h-0 flex-1 flex-col border-r border-t border-r-[#404040] border-t-white pr-[3px] pt-0.5">
          <TitleBar title="SpectraLAB - FFT Spectral Analysis System" />
          <nav className={`flex h-5 shrink-0 items-center gap-[11px] pl-1 pt-px ${UI}`}>
            {MENU.map((item) => (
              <button key={item}>{item}</button>
            ))}
          </nav>
          <MainToolbar />
          <div className="flex min-h-0 flex-1 overflow-hidden border-r border-black bg-[#808080]">
            <SpectrumWindow />
            <div className={`flex w-4 flex-col ${DITHER}`}>
              <button aria-label="Scroll up" className={`flex h-4 items-center justify-center ${RAISED}`}>
                <Arrow dir="up" />
              </button>
              <button aria-label="Scroll thumb" className={`h-[91%] ${RAISED}`} />
              <span className="flex-1" />
              <button aria-label="Scroll down" className={`flex h-4 items-center justify-center ${RAISED}`}>
                <Arrow dir="down" />
              </button>
            </div>
          </div>
          <StatusBar />
        </div>
      </div>
      <Taskbar />
      <Generator />
      <DelayFinder />
    </main>
  );
}
